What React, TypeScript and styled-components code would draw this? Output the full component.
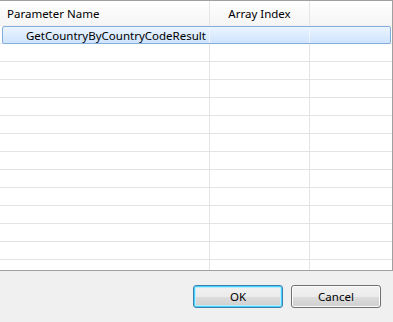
import React from 'react';
import styled, { createGlobalStyle } from 'styled-components';

const GlobalStyle = createGlobalStyle`
  html, body {
    margin: 0;
    padding: 0;
    background: #f0f0f0;
  }
  body {
    font-family: 'Noto Sans', 'Liberation Sans', Arial, sans-serif;
    font-size: 11.5px;
    color: #000;
  }
`;

const Dialog = styled.div`
  width: 393px;
  height: 322px;
  display: flex;
  flex-direction: column;
  background: #f0f0f0;
`;

const Table = styled.div`
  height: 269px;
  background: #fff;
  border-top: 1px solid #a0a0a0;
  border-right: 1px solid #a0a0a0;
  border-bottom: 1px solid #a0a0a0;
  overflow: hidden;
`;

const Columns = '210px 100px 1fr';

const HeaderRow = styled.div`
  display: grid;
  grid-template-columns: ${Columns};
  height: 24px;
  border-bottom: 1px solid #f0f0f0;
  background: linear-gradient(#ffffff, #f5f5f5);
`;

const HeaderCell = styled.div<{ $center?: boolean }>`
  display: flex;
  align-items: center;
  justify-content: ${(p) => (p.$center ? 'center' : 'flex-start')};
  padding-left: ${(p) => (p.$center ? '0' : '7px')};
  border-right: 1px solid #e5e5e5;
  white-space: nowrap;
  &:last-child {
    border-right: none;
  }
`;

const Row = styled.div`
  display: grid;
  grid-template-columns: ${Columns};
  height: 17px;
  border-bottom: 1px solid #e3e3e3;
`;

const Cell = styled.div`
  display: flex;
  align-items: center;
  border-right: 1px solid #e3e3e3;
  white-space: nowrap;
  &:last-child {
    border-right: none;
  }
`;

const SelectedRow = styled.div`
  grid-column: 1 / -1;
  display: grid;
  grid-template-columns: 207px 100px 1fr;
  height: 16px;
  margin: 0 1px 0 2px;
  border: 1px solid #84acdd;
  border-radius: 2px;
  background: linear-gradient(#ebf4fe, #cfe4fe);
`;

const SelectedCell = styled.div<{ $indent?: number }>`
  display: flex;
  align-items: center;
  padding-left: ${(p) => p.$indent ?? 0}px;
  border-right: 1px solid #eef5ff;
  white-space: nowrap;
  color: #000;
  &:last-child {
    border-right: none;
  }
`;

const Footer = styled.div`
  flex: 1;
  display: flex;
  justify-content: flex-end;
  align-items: flex-start;
  gap: 8px;
  padding: 14px 12px 0 0;
`;

const Button = styled.button<{ $default?: boolean }>`
  width: 90px;
  height: 23px;
  padding: 0;
  font-family: inherit;
  font-size: 11.5px;
  color: #000;
  border-radius: 3px;
  border: 1px solid ${(p) => (p.$default ? '#3c7fb1' : '#707070')};
  background: linear-gradient(#f2f2f2 0%, #ebebeb 50%, #dddddd 51%, #cfcfcf 100%);
  box-shadow: ${(p) =>
    p.$default ? 'inset 0 0 0 1px #48d4fa, inset 0 0 0 2px #b9ecfd' : 'inset 0 0 0 1px #fcfcfc'};
`;

const rowCount = 13;

export default function App() {
  return (
    <Dialog>
      <GlobalStyle />
      <Table>
        <HeaderRow>
          <HeaderCell>Parameter Name</HeaderCell>
          <HeaderCell $center>Array Index</HeaderCell>
          <HeaderCell />
        </HeaderRow>
        <Row>
          <SelectedRow>
            <SelectedCell $indent={23}>GetCountryByCountryCodeResult</SelectedCell>
            <SelectedCell />
            <SelectedCell />
          </SelectedRow>
        </Row>
        {Array.from({ length: rowCount }).map((_, i) => (
          <Row key={i}>
            <Cell />
            <Cell />
            <Cell />
          </Row>
        ))}
      </Table>
      <Footer>
        <Button $default>OK</Button>
        <Button>Cancel</Button>
      </Footer>
    </Dialog>
  );
}
